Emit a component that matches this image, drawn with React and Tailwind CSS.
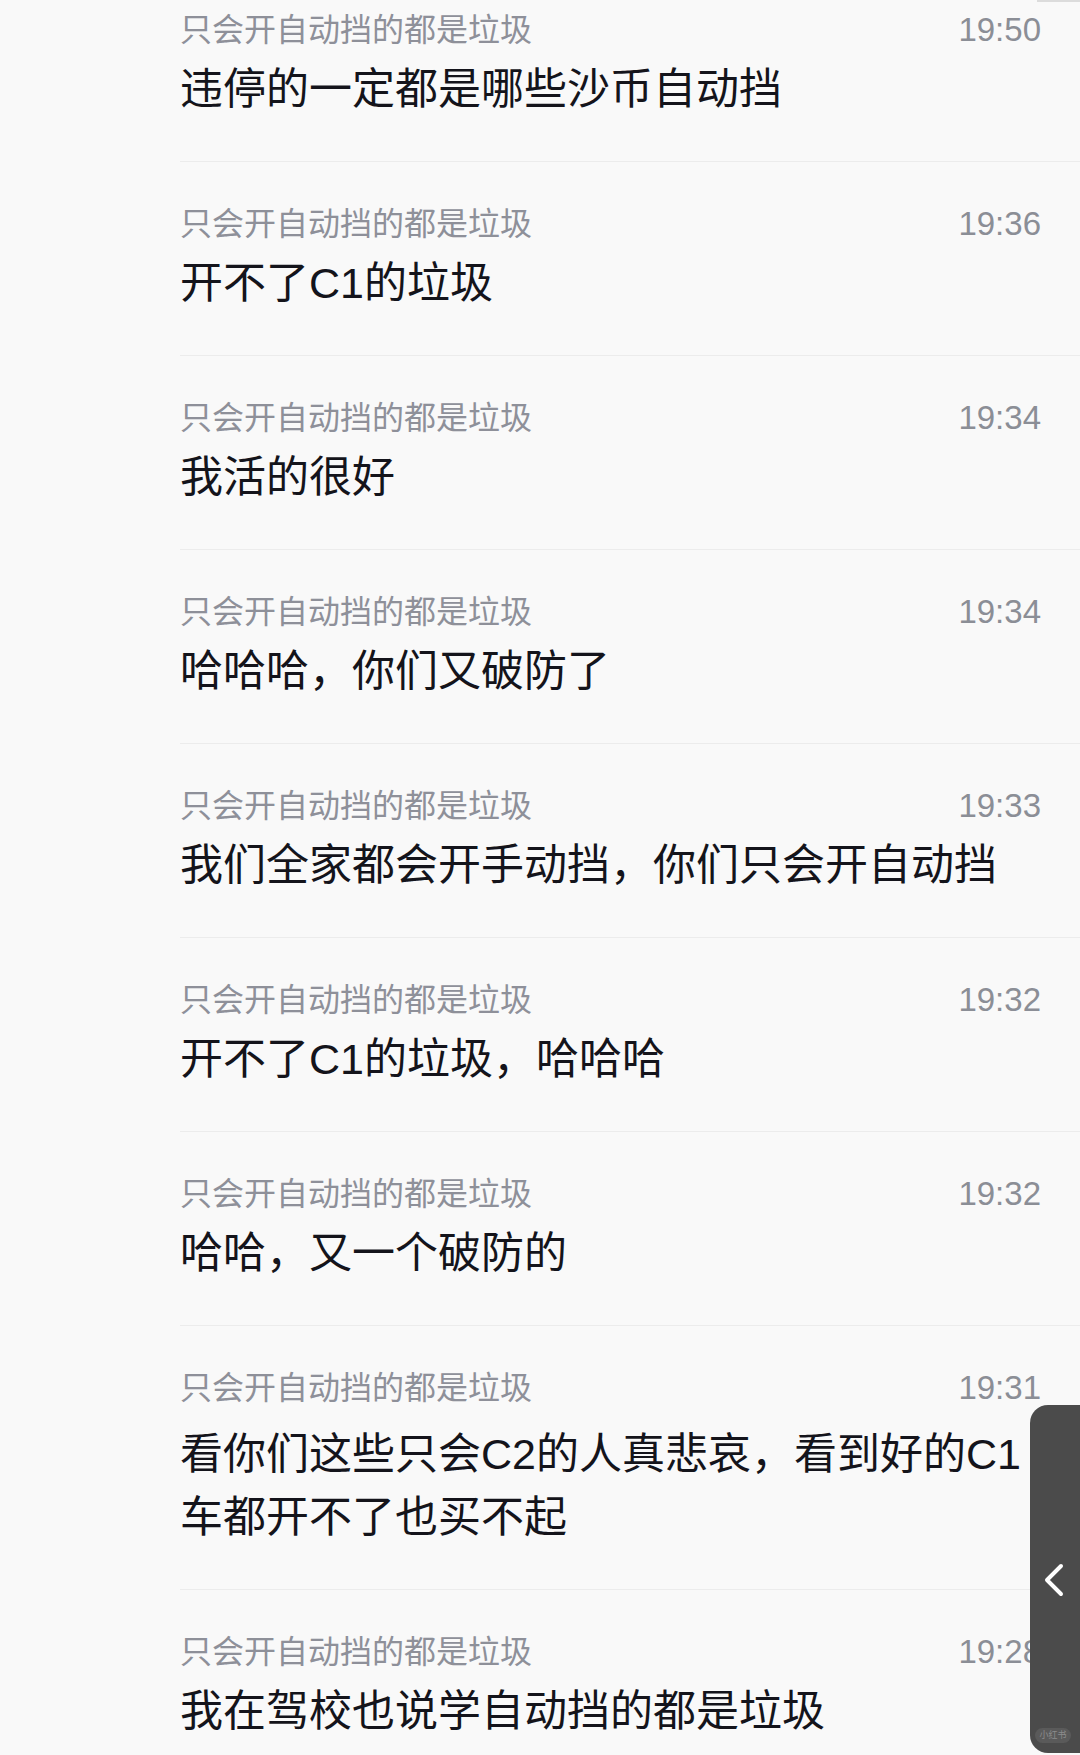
import React from 'react';

const SENDER = '只会开自动挡的都是垃圾';

const messages = [
  { time: '19:50', text: '违停的一定都是哪些沙币自动挡' },
  { time: '19:36', text: '开不了C1的垃圾' },
  { time: '19:34', text: '我活的很好' },
  { time: '19:34', text: '哈哈哈，你们又破防了' },
  { time: '19:33', text: '我们全家都会开手动挡，你们只会开自动挡' },
  { time: '19:32', text: '开不了C1的垃圾，哈哈哈' },
  { time: '19:32', text: '哈哈，又一个破防的' },
  { time: '19:31', text: '看你们这些只会C2的人真悲哀，看到好的C1车都开不了也买不起', wrap: true },
  { time: '19:28', text: '我在驾校也说学自动挡的都是垃圾' },
];

const font = { fontFamily: '"Liberation Sans", "Noto Sans CJK SC", sans-serif' };

const MessageRow = ({ time, text, wrap }) => (
  <div className="ml-[180px] border-b border-[#ececec] pt-[42px] pb-[40px] pr-[39px]">
    <div className="flex h-[40px] items-center justify-between">
      <span className="text-[32px] leading-[40px] text-[#8e9099]">{SENDER}</span>
      <span className="text-[33px] leading-[40px] text-[#8b8e96]">{time}</span>
    </div>
    <p className={`${wrap ? 'mt-[15px]' : 'mt-[8px]'} text-[43px] leading-[63px] text-[#14141b]`}>{text}</p>
  </div>
);

// collapsed side drawer handle
const DrawerHandle = () => (
  <div className="absolute left-[1030px] top-[1405px] flex h-[348px] w-[60px] items-center rounded-l-[18px] bg-[#4b4b4b]">
    <svg width="22" height="34" viewBox="0 0 22 34" className="ml-[14px] mt-[2px]">
      <polyline
        points="17,3 3,17 17,31"
        fill="none"
        stroke="#ffffff"
        strokeWidth="4"
        strokeLinecap="round"
        strokeLinejoin="round"
      />
    </svg>
    <div className="absolute bottom-[10px] left-[5px] flex h-[15px] w-[36px] items-center justify-center rounded-full bg-[#5a5a5a] text-[9px] leading-none text-[#8c8c8c]">
      小红书
    </div>
  </div>
);

export default function App() {
  return (
    <div className="relative h-[1755px] w-full overflow-hidden bg-[#f9f9f9]" style={font}>
      <div className="absolute right-0 top-0 h-[2px] w-[43px] bg-[#dcdcdc]" />
      <div className="-mt-[32px]">
        {messages.map((m, i) => (
          <MessageRow key={i} {...m} />
        ))}
      </div>
      <DrawerHandle />
    </div>
  );
}
